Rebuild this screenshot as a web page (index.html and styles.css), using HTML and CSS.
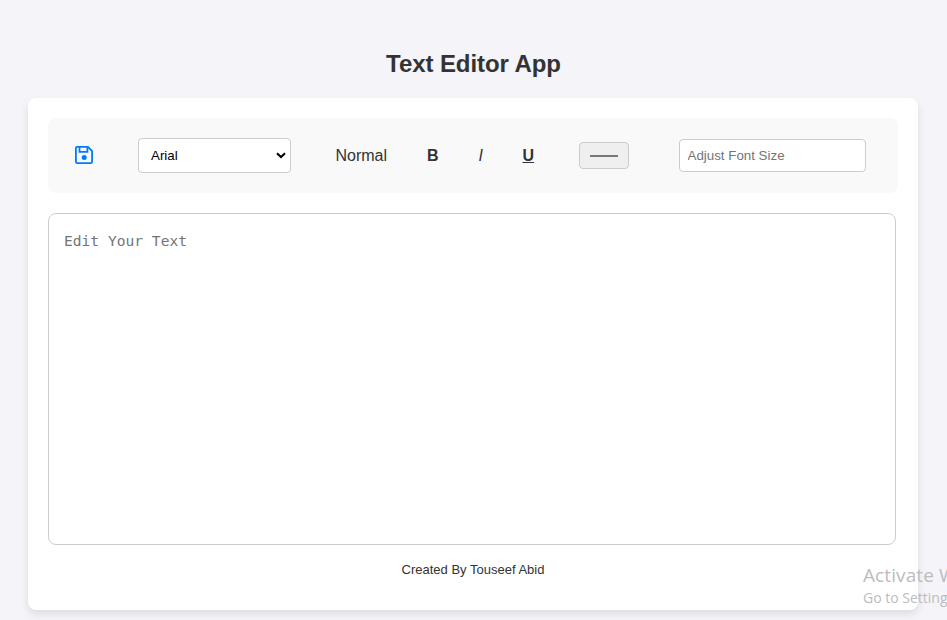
FILE: index.html
```html
<!DOCTYPE html>
<html lang="en">
<head>
<meta charset="utf-8">
<title>Text Editor App</title>
<link rel="stylesheet" href="styles.css">
</head>
<body>
<h1 class="title">Text Editor App</h1>
<main class="card">
  <div class="toolbar">
    <button class="save" aria-label="Save">
      <svg width="18" height="18" viewBox="0 0 18 18" fill="none" stroke="currentColor" stroke-width="1.8">
        <path d="M2 .9H13L17.1 5V15.7Q17.1 17.1 15.7 17.1H2.3Q.9 17.1 .9 15.7V2Q.9.9 2 .9Z"/>
        <path d="M4.5 1V5.8H12.4V1"/>
        <circle cx="9.2" cy="11.4" r="2.5" fill="currentColor" stroke="none"/>
      </svg>
    </button>
    <div class="font-select"><span>Arial</span>
      <svg width="10" height="7" viewBox="0 0 10 7" fill="none" stroke="#000" stroke-width="2"><path d="M1 1.2L5 5L9 1.2"/></svg>
    </div>
    <span class="style normal">Normal</span>
    <span class="style bold">B</span>
    <span class="style italic">I</span>
    <span class="style underline">U</span>
    <div class="color"><div class="swatch"></div></div>
    <input class="size" type="text" placeholder="Adjust Font Size">
  </div>
  <textarea class="editor" placeholder="Edit Your Text"></textarea>
  <p class="credit">Created By Touseef Abid</p>
</main>
<aside class="watermark">
  <div class="wm-title">Activate W</div>
  <div class="wm-text">Go to Setting</div>
</aside>
</body>
</html>
```
FILE: styles.css
```css
* { box-sizing: border-box; }
body {
  margin: 0;
  height: 620px;
  position: relative;
  overflow: hidden;
  padding: 50px 29px 0 28px;
  background: #f4f4f9;
  color: #333;
  font-family: Arial, "Liberation Sans", sans-serif;
}
.title { margin: 0 0 20px; padding-left: 1px; font-size: 24px; line-height: 28px; letter-spacing: -.08px; text-align: center; }
.card {
  height: 512px;
  padding: 20px;
  background: #fff;
  border-radius: 8px;
  box-shadow: 0 4px 8px rgba(0, 0, 0, .1);
}
.toolbar {
  display: flex;
  align-items: center;
  height: 75px;
  margin-bottom: 20px;
  padding-left: 27px;
  background: #f9f9f9;
  border-radius: 8px;
}
.save { display: flex; padding: 0; margin: 0 45px 2px 0; border: 0; background: none; color: #007bff; }
.font-select {
  display: flex;
  align-items: center;
  justify-content: space-between;
  width: 153px;
  height: 35px;
  padding: 0 4px 0 12px;
  margin-right: 44.5px;
  border: 1px solid #ccc;
  border-radius: 4px;
  background: #fff;
  color: #000;
  font-size: 13.333px;
}
.style { font-size: 16px; line-height: 18px; white-space: nowrap; }
.normal { width: 91.5px; }
.bold { width: 51.5px; font-weight: bold; }
.italic { width: 44px; font-style: italic; }
.underline { width: 56.5px; font-weight: bold; text-decoration: underline; }
.color {
  width: 50px;
  height: 27px;
  padding: 12px 10px;
  margin-right: 50px;
  border: 1px solid #ccc;
  border-radius: 4px;
  background: #efefef;
}
.swatch { height: 2px; background: #777; }
.size {
  width: 187px;
  height: 33px;
  padding: 0 7.5px 1px;
  border: 1px solid #ccc;
  border-radius: 4px;
  background: #fff;
  font: 13.333px Arial, "Liberation Sans", sans-serif;
}
::placeholder { color: #757575; opacity: 1; }
.editor {
  display: block;
  width: 848px;
  height: 332px;
  padding: 17px 15px;
  border: 1px solid #ccc;
  border-radius: 8px;
  background: #fff;
  resize: none;
  font: 14.6px/19px "DejaVu Sans Mono", monospace;
}
.credit { margin: 17px 0 0; font-size: 13px; line-height: 15px; text-align: center; }
.watermark {
  position: absolute;
  left: 863px;
  top: 563px;
  width: 84px;
  overflow: hidden;
  color: #bcbcbe;
  font-family: "Open Sans", sans-serif;
  white-space: nowrap;
}
.wm-title { font-size: 19px; line-height: 25px; letter-spacing: .1px; }
.wm-text { font-size: 14px; line-height: 20px; }
```
